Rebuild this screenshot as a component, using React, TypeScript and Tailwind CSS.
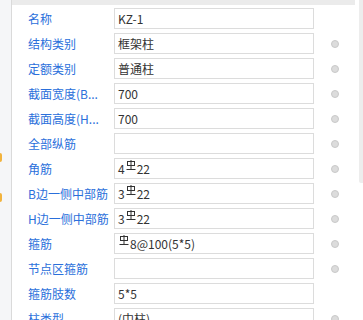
import React from "react";

const Rebar = () => (
  <svg width="10" height="11" viewBox="0 0 10 11" className="inline-block align-baseline mx-[1px] relative top-[-3px]" fill="none" stroke="#333" strokeWidth="1">
    <rect x="1.5" y="1.5" width="7" height="4" />
    <line x1="5" y1="0" x2="5" y2="9.5" />
    <line x1="0.5" y1="9.5" x2="9.5" y2="9.5" />
  </svg>
);

type Row = { label: string; value: React.ReactNode; dot: boolean };

const rows: Row[] = [
  { label: "名称", value: "KZ-1", dot: false },
  { label: "结构类别", value: "框架柱", dot: true },
  { label: "定额类别", value: "普通柱", dot: true },
  { label: "截面宽度(B...", value: "700", dot: true },
  { label: "截面高度(H...", value: "700", dot: true },
  { label: "全部纵筋", value: "", dot: true },
  { label: "角筋", value: <>4<Rebar />22</>, dot: true },
  { label: "B边一侧中部筋", value: <>3<Rebar />22</>, dot: true },
  { label: "H边一侧中部筋", value: <>3<Rebar />22</>, dot: true },
  { label: "箍筋", value: <><Rebar />8@100(5*5)</>, dot: true },
  { label: "节点区箍筋", value: "", dot: true },
  { label: "箍筋肢数", value: "5*5", dot: false },
  { label: "柱类型", value: "(中柱)", dot: true },
];

export default function App() {
  return (
    <div
      className="w-[363px] h-[320px] overflow-hidden bg-white flex relative text-[12px]"
      style={{ fontFamily: '"Noto Sans CJK SC", "Noto Sans", sans-serif' }}
    >
      <div className="w-[12px] shrink-0 bg-[#f5f6f8] border-r border-[#dadada]" />
      <div className="absolute left-0 top-[153px] w-[2px] h-[9px] bg-[#f2b33d] rounded-r-sm" />
      <div className="absolute left-0 top-[193px] w-[2px] h-[9px] bg-[#f2b33d] rounded-r-sm" />
      <div className="flex-1 flex flex-col">
        <div className="h-[5px] w-[343px] bg-[#ebebeb] shrink-0" />
        <div className="flex flex-col gap-[4px] pt-[3px]">
          {rows.map((r, i) => (
            <div key={i} className="flex items-center h-[21px] shrink-0">
              <div className="w-[86px] pl-[16px] box-content text-[#2a6fdb] whitespace-nowrap overflow-hidden leading-[21px]">
                {r.label}
              </div>
              <div className="w-[200px] h-[21px] border border-[#dcdcdc] pl-[3px] text-[#333] leading-[19px] whitespace-nowrap overflow-hidden">
                {r.value}
              </div>
              <div className="w-[17px]" />
              {r.dot && (
                <div className="w-[8px] h-[8px] rounded-full bg-[#dcdcdc] border border-[#c9c9c9]" />
              )}
            </div>
          ))}
        </div>
      </div>
      <div className="absolute right-0 top-0 w-[4px] h-[183px] bg-[#ededed] rounded-bl-[2px]" />
    </div>
  );
}
